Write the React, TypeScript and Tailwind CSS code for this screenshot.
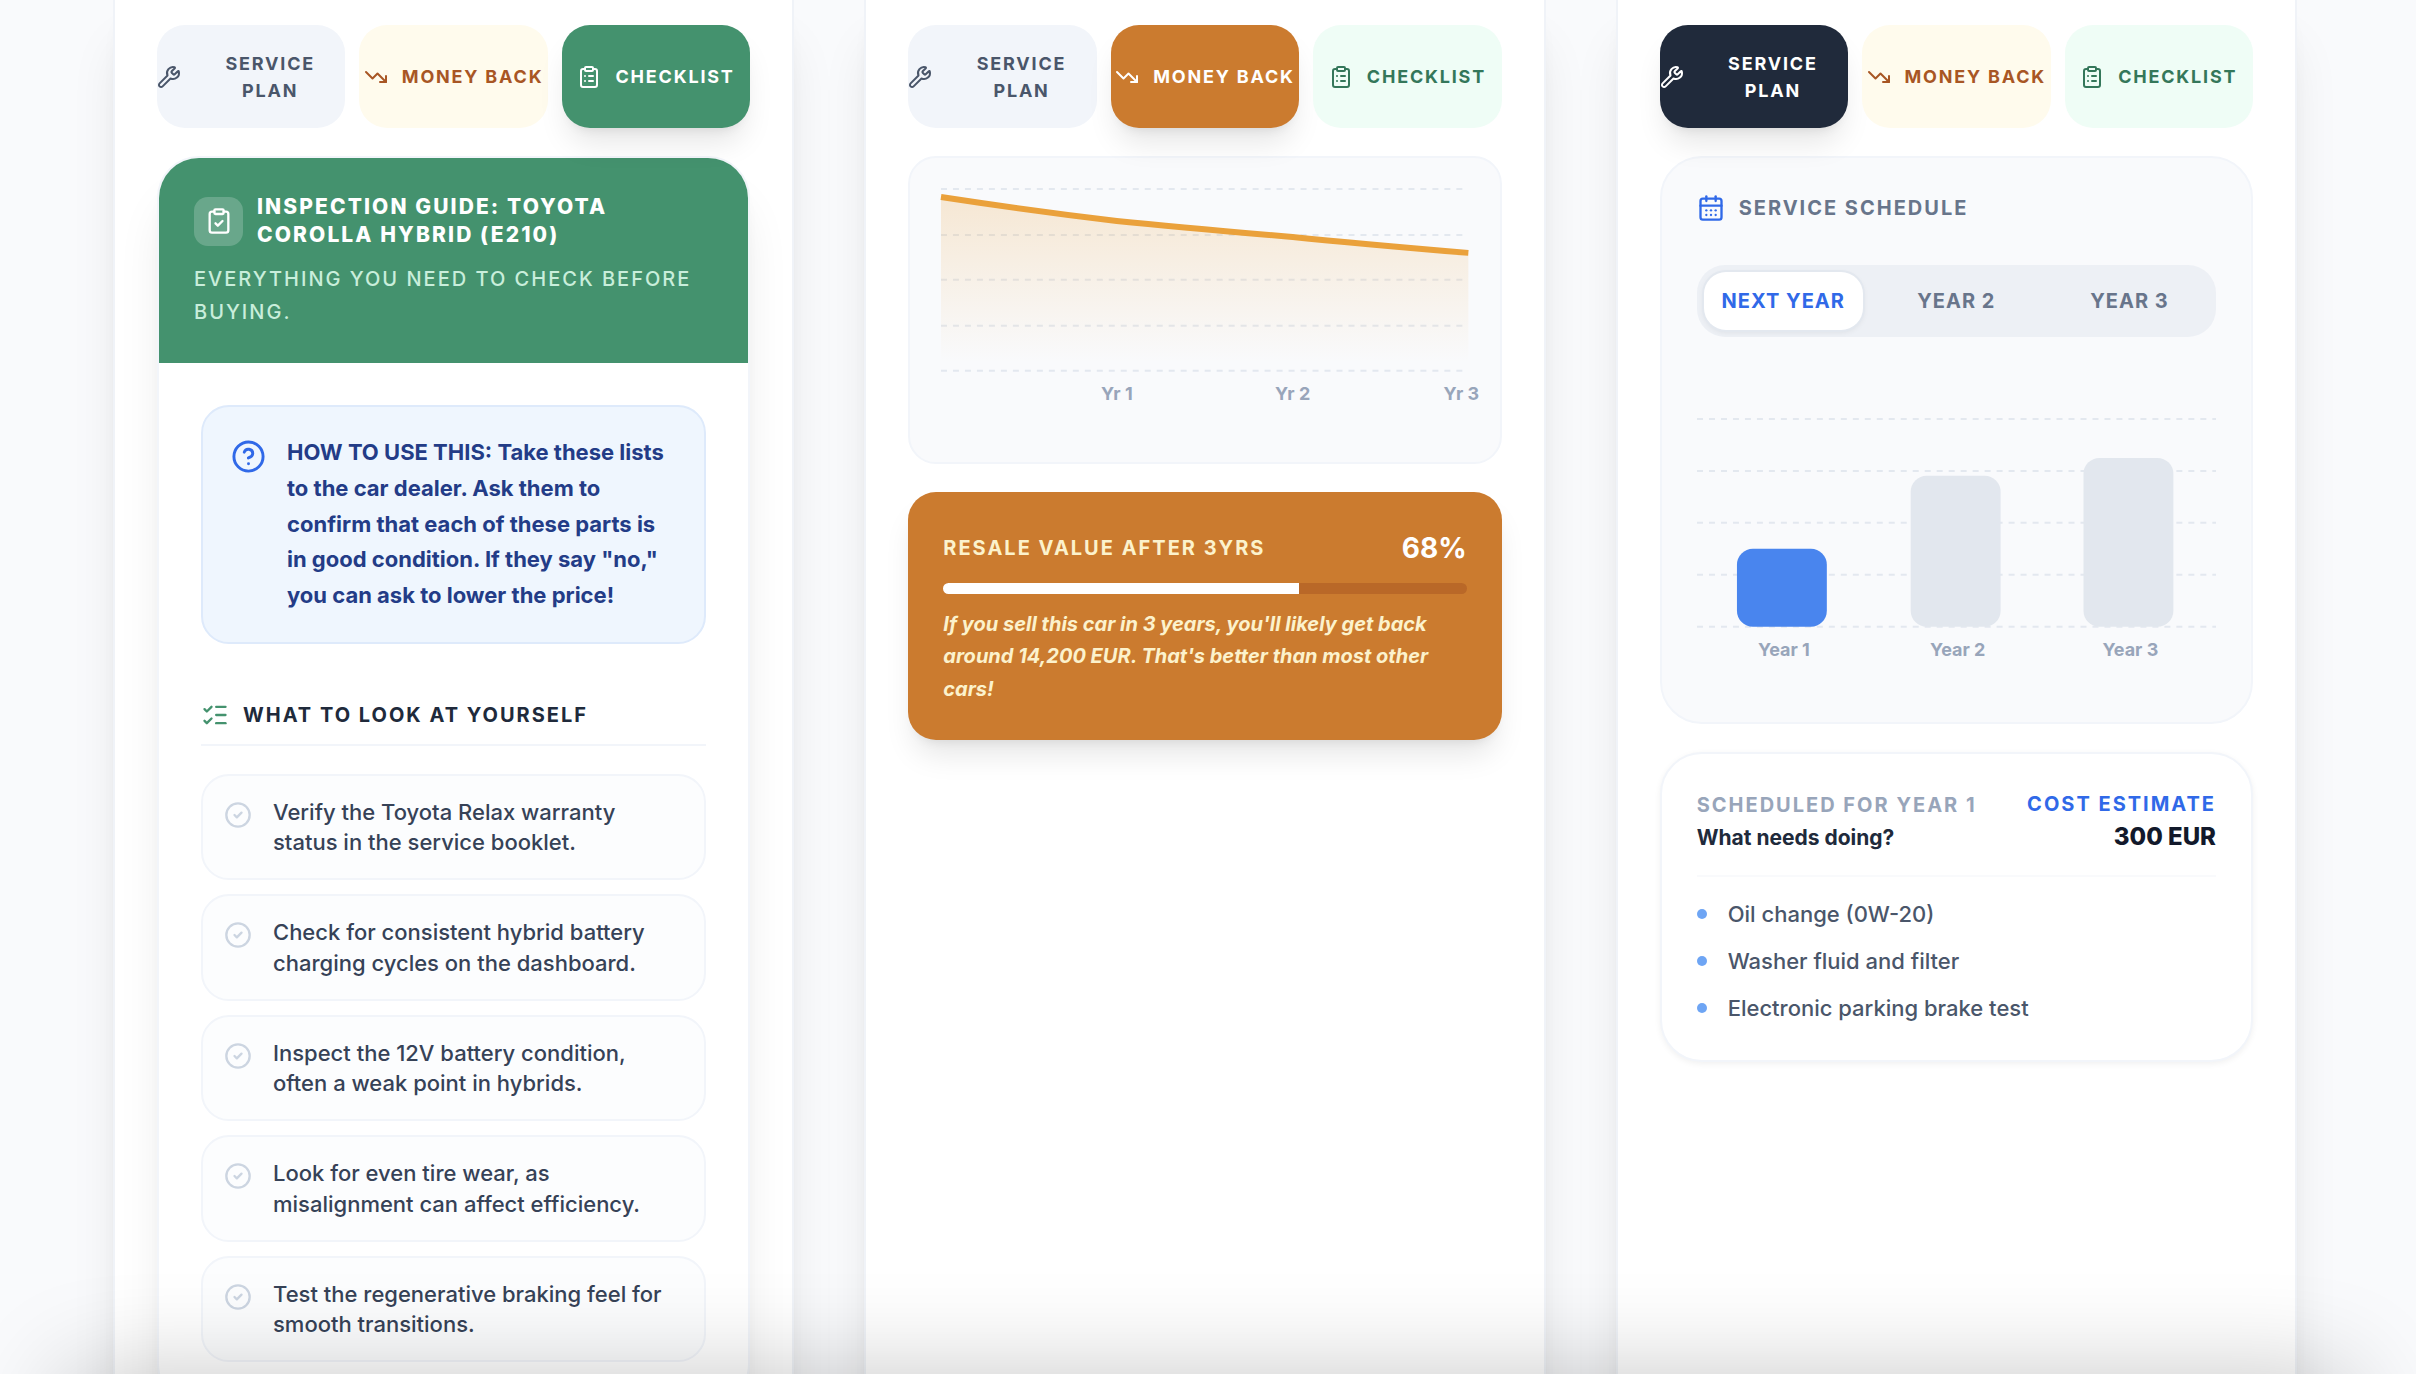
import React, { useState } from "react";
import {
  CalendarDays,
  CircleCheck,
  CircleHelp,
  ClipboardCheck,
  ClipboardList,
  ListChecks,
  TrendingDown,
  Wrench,
} from "lucide-react";

type TabId = "service" | "money" | "checklist";

const tabs = [
  {
    id: "service" as TabId,
    label: "Service Plan",
    Icon: Wrench,
    idle: "bg-[#f2f5fa] text-[#4a566a]",
    active: "bg-[#202a3b] text-white shadow-[0_20px_30px_-6px_rgba(0,0,0,0.1),0_8px_12px_-8px_rgba(0,0,0,0.1)]",
  },
  {
    id: "money" as TabId,
    label: "Money Back",
    Icon: TrendingDown,
    idle: "bg-[#fffbed] text-[#a85624]",
    active: "bg-[#cb7b2f] text-white shadow-[0_20px_30px_-6px_rgba(0,0,0,0.1),0_8px_12px_-8px_rgba(0,0,0,0.1)]",
  },
  {
    id: "checklist" as TabId,
    label: "Checklist",
    Icon: ClipboardList,
    idle: "bg-[#effdf6] text-[#34775a]",
    active: "bg-[#44926e] text-white shadow-[0_20px_30px_-6px_rgba(0,0,0,0.1),0_8px_12px_-8px_rgba(0,0,0,0.1)]",
  },
];

function TabBar({ value, onChange }: { value: TabId; onChange: (id: TabId) => void }) {
  return (
    <div role="tablist" className="grid grid-cols-3 gap-3.5">
      {tabs.map(({ id, label, Icon, idle, active }) => (
        <button
          key={id}
          type="button"
          role="tab"
          aria-selected={id === value}
          onClick={() => onChange(id)}
          className={`flex min-h-[103px] items-center justify-center gap-3.5 rounded-[28px] text-lg leading-[27px] font-bold tracking-widest uppercase ${
            id === value ? active : idle
          }`}
        >
          <Icon className="size-6 shrink-0" aria-hidden="true" />
          <span>{label}</span>
        </button>
      ))}
    </div>
  );
}

const checks = [
  "Verify the Toyota Relax warranty status in the service booklet.",
  "Check for consistent hybrid battery charging cycles on the dashboard.",
  "Inspect the 12V battery condition, often a weak point in hybrids.",
  "Look for even tire wear, as misalignment can affect efficiency.",
  "Test the regenerative braking feel for smooth transitions.",
];

function Checklist() {
  return (
    <section className="overflow-hidden rounded-[42px] border-2 border-[#f2f5fa] bg-white shadow-[0_40px_50px_-10px_rgba(0,0,0,0.1),0_16px_20px_-12px_rgba(0,0,0,0.1)]">
      <header className="bg-[#44926e] p-[35px]">
        <div className="flex items-center gap-3.5">
          <div className="flex size-[49px] shrink-0 items-center justify-center rounded-[14px] bg-white/20 text-white">
            <ClipboardCheck className="size-7" aria-hidden="true" />
          </div>
          <h2 className="text-[21px] leading-7 font-extrabold tracking-widest text-white uppercase">
            Inspection Guide: Toyota Corolla Hybrid (E210)
          </h2>
        </div>
        <p className="mt-3.5 text-xl leading-relaxed font-medium tracking-widest text-[#c9eedb] uppercase">
          Everything you need to check before buying.
        </p>
      </header>
      <div className="p-[42px]">
        <div className="flex gap-[21px] rounded-[28px] border-2 border-[#deeafb] bg-[#eff6fe] p-7">
          <CircleHelp className="mt-1 size-[35px] shrink-0 text-[#3069e8]" aria-hidden="true" />
          <p className="text-[22px] leading-relaxed font-bold text-[#233c87]">
            HOW TO USE THIS: Take these lists to the car dealer. Ask them to confirm that each of these parts is in
            good condition. If they say "no," you can ask to lower the price!
          </p>
        </div>
        <h3 className="mt-14 flex items-center gap-3.5 border-b-2 border-[#f2f5fa] pb-3.5 text-xl leading-[30px] font-bold tracking-widest text-[#202a3b] uppercase">
          <ListChecks className="size-7 text-[#44926e]" aria-hidden="true" />
          What to look at yourself
        </h3>
        <ul className="mt-7 flex flex-col gap-3.5">
          {checks.map((text) => (
            <li
              key={text}
              className="flex gap-[21px] rounded-[28px] border-2 border-[#f2f5fa] bg-[#fcfdfe] p-[21px] text-[22px] leading-snug font-medium text-[#364257]"
            >
              <CircleCheck className="mt-1 size-7 shrink-0 text-[#ccd5e1]" aria-hidden="true" />
              <span>{text}</span>
            </li>
          ))}
        </ul>
      </div>
    </section>
  );
}

function MoneyBack() {
  const resale = 68;
  return (
    <>
      <section className="rounded-[28px] border-2 border-[#f2f5fa] bg-[#f9fafc]">
        <svg viewBox="0 0 590 304" className="block h-auto w-full" role="img" aria-label="Value over three years">
          <defs>
            <linearGradient id="valueFill" x1="0" y1="0" x2="0" y2="1">
              <stop offset="5%" stopColor="#eaa13b" stopOpacity="0.2" />
              <stop offset="95%" stopColor="#eaa13b" stopOpacity="0" />
            </linearGradient>
          </defs>
          {[31, 77, 122, 168, 213].map((y) => (
            <line key={y} x1="31" x2="559" y1={y} y2={y} stroke="#e3e8ef" strokeWidth="2" strokeDasharray="6 6" />
          ))}
          <path d="M31 39C90 48 148 56 207 63C266 69 324 74 383 79C442 85 500 90 559 95V213H31Z" fill="url(#valueFill)" />
          <path
            d="M31 39C90 48 148 56 207 63C266 69 324 74 383 79C442 85 500 90 559 95"
            fill="none"
            stroke="#eaa13b"
            strokeWidth="6"
          />
          <g className="fill-[#98a5ba] text-lg font-bold" textAnchor="middle">
            <text x="207" y="242">Yr 1</text>
            <text x="383" y="242">Yr 2</text>
            <text x="552" y="242">Yr 3</text>
          </g>
        </svg>
      </section>
      <section className="mt-7 rounded-[28px] bg-[#cb7b2f] p-[35px] shadow-[0_20px_30px_-6px_rgba(0,0,0,0.1),0_8px_12px_-8px_rgba(0,0,0,0.1)]">
        <div className="flex items-center justify-between">
          <h2 className="text-xl font-bold tracking-widest text-[#fcf2cc] uppercase">Resale value after 3yrs</h2>
          <span className="text-[28px] leading-[42px] font-bold text-white">{resale}%</span>
        </div>
        <div className="mt-3.5 h-[11px] overflow-hidden rounded-full bg-[#b96828]">
          <div className="h-full bg-white" style={{ width: `${resale}%` }} />
        </div>
        <p className="mt-3.5 text-xl leading-relaxed font-bold text-[#fcf2cc] italic">
          If you sell this car in 3 years, you'll likely get back around 14,200 EUR. That's better than most other
          cars!
        </p>
      </section>
    </>
  );
}

const years = [
  { tab: "Next Year", label: "Year 1", x: 40, top: 170 },
  { tab: "Year 2", label: "Year 2", x: 214, top: 97 },
  { tab: "Year 3", label: "Year 3", x: 387, top: 79 },
];

function ServicePlan() {
  const [year, setYear] = useState(0);
  return (
    <>
      <section className="rounded-[42px] border-2 border-[#f2f5fa] bg-[#f9fafc] p-[35px]">
        <h2 className="flex items-center gap-3.5 text-xl leading-[30px] font-bold tracking-widest text-[#68758b] uppercase">
          <CalendarDays className="size-7 text-[#3069e8]" aria-hidden="true" />
          Service Schedule
        </h2>
        <div className="mt-[42px] grid grid-cols-3 gap-3.5 rounded-[28px] bg-[#edf0f5] p-[7px]">
          {years.map(({ tab }, i) => (
            <button
              key={tab}
              type="button"
              aria-pressed={i === year}
              onClick={() => setYear(i)}
              className={`rounded-[22px] py-3.5 text-xl leading-[30px] font-bold tracking-wider uppercase ${
                i === year
                  ? "bg-white text-[#3069e8] shadow-[0_2px_6px_rgba(0,0,0,0.08)] ring-2 ring-[#e3e8ef]"
                  : "text-[#68758b]"
              }`}
            >
              {tab}
            </button>
          ))}
        </div>
        <svg viewBox="0 0 520 308" className="mt-[42px] block h-auto w-full" role="img" aria-label="Cost by year">
          {[40, 92, 144, 196, 248].map((y) => (
            <line key={y} x1="0" x2="520" y1={y} y2={y} stroke="#e3e8ef" strokeWidth="2" strokeDasharray="6 6" />
          ))}
          {years.map(({ label, x, top }, i) => (
            <g key={label}>
              <rect x={x} y={top} width="90" height={248 - top} rx="16" fill={i === year ? "#4985ee" : "#e2e7ee"} />
              <text x={x + 47} y="277" textAnchor="middle" className="fill-[#98a5ba] text-lg font-bold">
                {label}
              </text>
            </g>
          ))}
        </svg>
      </section>
      <section className="mt-7 rounded-[42px] border-2 border-[#f2f5fa] bg-white p-[35px] shadow-[0_2px_6px_rgba(0,0,0,0.06)]">
        <div className="flex items-center justify-between border-b-2 border-[#f9fafc] pb-[21px]">
          <div className="flex flex-col gap-[3px] leading-[30px] font-bold">
            <h3 className="text-xl leading-[30px] tracking-widest text-[#98a5ba] uppercase">
              Scheduled for Year {year + 1}
            </h3>
            <p className="text-[21px] text-[#202a3b]">What needs doing?</p>
          </div>
          <div className="text-right">
            <p className="text-xl leading-[30px] font-bold tracking-widest text-[#3069e8] uppercase">Cost estimate</p>
            <p className="text-2xl leading-[35px] font-extrabold text-[#12192b]">300 EUR</p>
          </div>
        </div>
        <ul className="mt-[21px] flex flex-col gap-3.5">
          {["Oil change (0W-20)", "Washer fluid and filter", "Electronic parking brake test"].map((item) => (
            <li key={item} className="flex items-center gap-[21px] text-[22px] leading-[33px] font-medium text-[#4a566a]">
              <span className="size-2.5 shrink-0 rounded-full bg-[#6ea5f4]" />
              {item}
            </li>
          ))}
        </ul>
      </section>
    </>
  );
}

function Phone({ initial }: { initial: TabId }) {
  const [tab, setTab] = useState<TabId>(initial);
  return (
    <article className="border-x-2 border-[#f0f3f8] bg-white px-[42px] pt-[25px] pb-14 shadow-[0_40px_50px_-10px_rgba(0,0,0,0.1),0_16px_20px_-12px_rgba(0,0,0,0.1)]">
      <TabBar value={tab} onChange={setTab} />
      <div className="mt-7">
        {tab === "checklist" && <Checklist />}
        {tab === "money" && <MoneyBack />}
        {tab === "service" && <ServicePlan />}
      </div>
    </article>
  );
}

export default function App() {
  return (
    <div className="h-screen overflow-hidden bg-[#f9fafc] font-['Inter',sans-serif] antialiased">
      <main className="grid min-h-full grid-cols-3 gap-[70px] pr-[119px] pl-[113px]">
        <Phone initial="checklist" />
        <Phone initial="money" />
        <Phone initial="service" />
      </main>
      <div className="pointer-events-none fixed inset-x-16 top-full h-40 shadow-[0_0_100px_rgba(0,0,0,0.22)]" />
    </div>
  );
}
